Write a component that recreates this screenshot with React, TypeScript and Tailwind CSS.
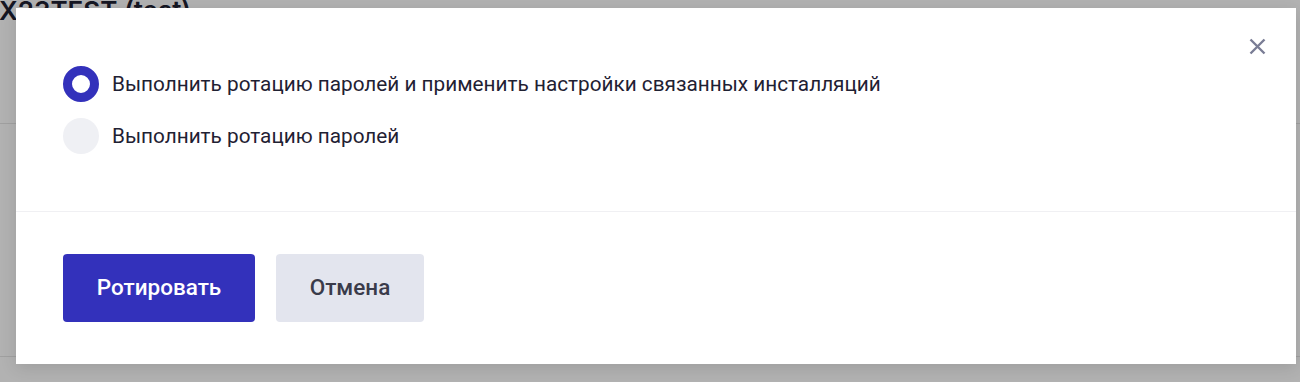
import React from "react";

export default function App() {
  return (
    <div className="relative w-[1300px] h-[382px] overflow-hidden bg-white" style={{ fontFamily: "Roboto, 'Noto Sans', sans-serif" }}>
      {/* background page */}
      <div className="absolute inset-0">
        <div className="absolute left-[-1px] top-[-2px] text-[26px] font-semibold text-[#1f2133] leading-none whitespace-nowrap" style={{ fontFamily: "Inter, Roboto, sans-serif" }}>X23TEST (test)</div>
        <div className="absolute left-0 right-0 top-[123px] h-px bg-[#e6e6e6]"></div>
        <div className="absolute left-0 right-0 top-[356px] h-px bg-[#e6e6e6]"></div>
      </div>
      {/* overlay */}
      <div className="absolute inset-0 bg-black/30"></div>
      {/* modal */}
      <div className="absolute left-[16px] top-[8px] w-[1280px] h-[356px] bg-white flex flex-col shadow-[0_4px_16px_rgba(0,0,0,0.12)]">
        <button className="absolute right-[30px] top-[30px] w-[17px] h-[17px] flex items-center justify-center text-[#7a7d95]">
          <svg width="17" height="17" viewBox="0 0 17 17" fill="none" stroke="currentColor" strokeWidth="2.4" strokeLinecap="butt">
            <path d="M1.5 1.5L15.5 15.5M15.5 1.5L1.5 15.5" />
          </svg>
        </button>
        <div className="h-[203px] pl-[47px] pt-[58px] flex flex-col gap-[16px]">
          <label className="flex items-center gap-[13px]">
            <span className="w-[36px] h-[36px] rounded-full border-[9px] border-[#3331bb] bg-white shrink-0"></span>
            <span className="text-[20.75px] text-[#1f2133] leading-none">Выполнить ротацию паролей и применить настройки связанных инсталляций</span>
          </label>
          <label className="flex items-center gap-[13px]">
            <span className="w-[36px] h-[36px] rounded-full bg-[#eff0f4] shrink-0"></span>
            <span className="text-[20.75px] text-[#1f2133] leading-none">Выполнить ротацию паролей</span>
          </label>
        </div>
        <div className="h-px bg-[#f0f0f3]"></div>
        <div className="flex-1 pl-[47px] flex items-center gap-[21px]">
          <button className="w-[192px] h-[68px] rounded-[4px] bg-[#3331bb] text-white text-[22.5px] font-medium">Ротировать</button>
          <button className="w-[148px] h-[68px] rounded-[4px] bg-[#e3e5ee] text-[#3a3b4a] text-[22.5px] font-medium">Отмена</button>
        </div>
      </div>
    </div>
  );
}
